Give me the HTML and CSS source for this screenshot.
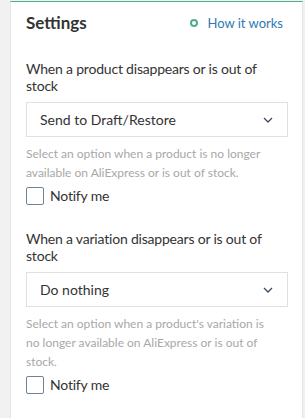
FILE: index.html
```html
<!DOCTYPE html>
<html lang="en">
<head>
    <meta charset="UTF-8">
    <meta name="viewport" content="width=device-width, initial-scale=1.0">
    <title>Settings</title>
    <link rel="stylesheet" href="styles.css">
</head>
<body>
    <div class="card">
        <div class="card-head">
            <h2>Settings</h2>
            <a href="#" class="how-link"><span class="ring"></span>How it works</a>
        </div>

        <div class="field">
            <label class="field-label">When a product disappears or is out of stock</label>
            <div class="select">
                <span>Send to Draft/Restore</span>
                <svg width="10" height="6" viewBox="0 0 10 6"><path d="M1 1l4 4 4-4" fill="none" stroke="#3c4a5a" stroke-width="1.3"/></svg>
            </div>
            <p class="help">Select an option when a product is no longer available on AliExpress or is out of stock.</p>
            <label class="check"><span class="box"></span>Notify me</label>
        </div>

        <div class="field">
            <label class="field-label">When a variation disappears or is out of stock</label>
            <div class="select">
                <span>Do nothing</span>
                <svg width="10" height="6" viewBox="0 0 10 6"><path d="M1 1l4 4 4-4" fill="none" stroke="#3c4a5a" stroke-width="1.3"/></svg>
            </div>
            <p class="help">Select an option when a product's variation is no longer available on AliExpress or is out of stock.</p>
            <label class="check"><span class="box"></span>Notify me</label>
        </div>
    </div>
</body>
</html>
```

FILE: styles.css
```css
body {
    margin: 0;
    padding: 1px 2px 0 10px;
    background: #f1f1f1;
    font-family: 'Lato', 'Open Sans', sans-serif;
    color: #333;
    overflow: hidden;
}
.card {
    background: #fff;
    border: 1px solid #e4e4e4;
    border-top: 1px solid #4caf8c;
    border-bottom: none;
    padding: 11px 14px 20px 15px;
    height: 390px;
}
.card-head {
    display: flex;
    justify-content: space-between;
    align-items: center;
    margin-bottom: 27px;
}
.card-head h2 {
    margin: 0;
    font-size: 17px;
    line-height: 20px;
    font-weight: 700;
    color: #333;
}
.how-link {
    display: flex;
    align-items: center;
    font-size: 13px;
    color: #3079b5;
    text-decoration: none;
    margin-right: 5px;
}
.ring {
    width: 4px;
    height: 4px;
    border: 2px solid #4caf8c;
    border-radius: 50%;
    margin-right: 9px;
}
.field {
    margin-bottom: 25px;
}
.field-label {
    display: block;
    font-size: 14px;
    line-height: 17px;
    letter-spacing: -0.2px;
    margin-bottom: 8px;
}
.select {
    display: flex;
    justify-content: space-between;
    align-items: center;
    height: 33px;
    border: 1px solid #e0e0e0;
    padding: 0 14px 0 13px;
    font-size: 14px;
}
.help {
    margin: 7px 0 5px;
    padding-right: 8px;
    font-size: 12px;
    line-height: 19px;
    color: #a8a8a8;
}
.check {
    display: flex;
    align-items: center;
    font-size: 14px;
    line-height: 18px;
    letter-spacing: -0.2px;
}
.box {
    width: 16px;
    height: 16px;
    border: 1px solid #6f8396;
    border-radius: 2px;
    margin-right: 6px;
}
```
